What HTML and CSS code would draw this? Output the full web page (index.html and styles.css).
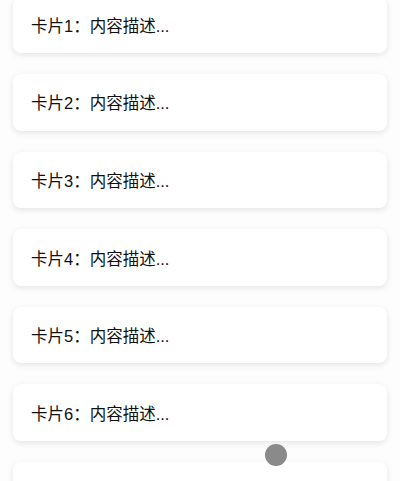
FILE: index.html
```html
<!DOCTYPE html>
<html lang="zh-CN">
<head>
<meta charset="UTF-8">
<title>卡片列表</title>
<link rel="stylesheet" href="styles.css">
</head>
<body>

<div class="list">
  <div class="card">卡片1：内容描述...</div>
  <div class="card">卡片2：内容描述...</div>
  <div class="card">卡片3：内容描述...</div>
  <div class="card">卡片4：内容描述...</div>
  <div class="card">卡片5：内容描述...</div>
  <div class="card">卡片6：内容描述...</div>
  <div class="card"></div>
</div>

<div class="touch"></div>

</body>
</html>
```

FILE: styles.css
```css
body {
  margin: 0;
  background-color: #fdfdfd;
  font-family: "Liberation Sans", "Noto Sans CJK SC", sans-serif;
  color: #111;
  overflow: hidden;
  height: 481px;
}

.list {
  display: flex;
  flex-direction: column;
  gap: 21px;
  padding: 0 13px;
  margin-top: -3.5px;
}

.card {
  background-color: #fff;
  border-radius: 8px;
  box-shadow: 0 2px 6px rgba(0, 0, 0, 0.1);
  height: 56.6px;
  padding: 0 18px;
  display: flex;
  align-items: center;
  font-size: 16.5px;
  box-sizing: border-box;
}

.touch {
  position: absolute;
  left: 265px;
  top: 444px;
  width: 22px;
  height: 22px;
  border-radius: 50%;
  background-color: #8a8a8a;
}
```
